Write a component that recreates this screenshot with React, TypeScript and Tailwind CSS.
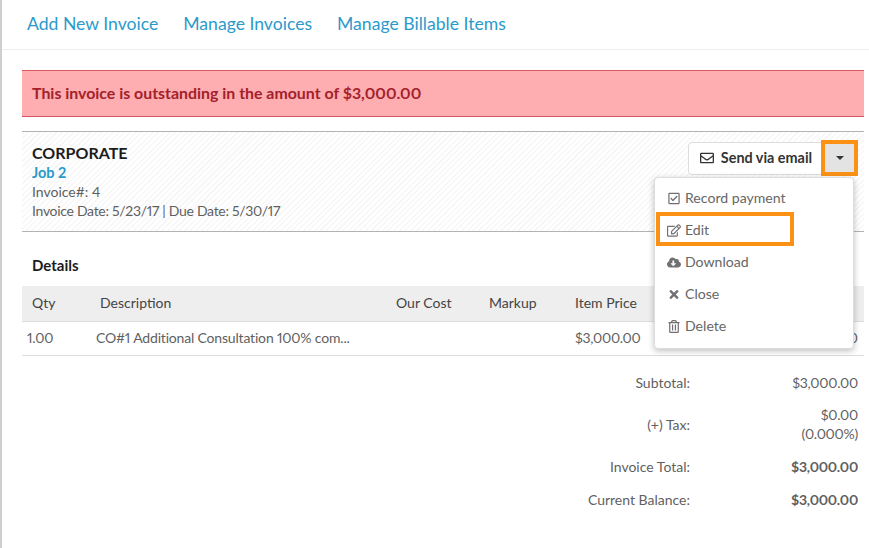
import { FaRegEnvelope, FaRegCheckSquare, FaRegEdit, FaCloudDownloadAlt, FaTimes, FaRegTrashAlt } from "react-icons/fa";

const menuItems = [
  { icon: FaRegCheckSquare, label: "Record payment" },
  { icon: FaRegEdit, label: "Edit" },
  { icon: FaCloudDownloadAlt, label: "Download" },
  { icon: FaTimes, label: "Close" },
  { icon: FaRegTrashAlt, label: "Delete" },
];

const totals = [
  { label: "Subtotal:", value: ["$3,000.00"], bold: false, height: "h-[32px]" },
  { label: "(+) Tax:", value: ["$0.00", "(0.000%)"], bold: false, height: "h-[52px]" },
  { label: "Invoice Total:", value: ["$3,000.00"], bold: true, height: "h-[33px]" },
  { label: "Current Balance:", value: ["$3,000.00"], bold: true, height: "h-[33px]" },
];

const App = () => (
  <div className="relative h-[548px] w-[869px] overflow-hidden border-l-2 border-[#cfcfcf] bg-white font-['Lato',sans-serif] text-[14px] text-[#5f5f5f] proportional-nums">
    <nav className="flex h-[50px] items-center gap-[25px] border-b border-[#eeeeee] pl-[25px] pb-[1px] text-[17.6px] text-[#2b9acb]">
      <a>Add New Invoice</a>
      <a>Manage Invoices</a>
      <a>Manage Billable Items</a>
    </nav>

    <div className="mt-5 ml-5 mr-[5px]">
      <div className="flex h-[47px] items-center border-y border-[#d9575f] bg-[#feadb1] pb-[2px] pl-[10px] text-[15.9px] font-bold text-[#a3212b]">
        This invoice is outstanding in the amount of $3,000.00
      </div>

      <div className="mt-[14px] flex h-[101px] justify-between border-y border-[#b3b3b3] bg-[repeating-linear-gradient(135deg,#f7f7f7_0px,#f7f7f7_1.5px,#ffffff_1.5px,#ffffff_4px)] pr-[6px] pl-[10px]">
        <div className="pt-[11px]">
          <div className="text-[16px] leading-[20px] font-bold text-[#1c1c1c]">CORPORATE</div>
          <div className="text-[14.5px] leading-[19px] font-bold text-[#2b9acb]">Job 2</div>
          <div className="leading-[19px]">Invoice#: 4</div>
          <div className="leading-[19px] tracking-[-0.3px]">Invoice Date: 5/23/17 | Due Date: 5/30/17</div>
        </div>
        <div className="mt-[8px] flex items-start">
          <button className="mt-[2px] flex h-[33px] w-[134px] items-center justify-center gap-[7px] rounded-l-[4px] border border-[#dddddd] bg-white pb-[2px] pl-[2px] text-[14.4px] font-bold text-[#333333]">
            <FaRegEnvelope className="h-[14px] w-[14px]" />
            Send via email
          </button>
          <button className="-ml-px flex h-[36px] w-[37px] items-center justify-center border-4 border-[#fb9216] bg-[#e3e3e3]">
            <span className="h-0 w-0 border-x-[4px] border-t-[4px] border-x-transparent border-t-[#333333]" />
          </button>
        </div>
      </div>

      <div className="flex h-[54px] items-center pt-[13px] pl-[10px] text-[15px] font-bold text-[#1c1c1c]">Details</div>

      <div className="grid h-[36px] grid-cols-[78px_296px_93px_86px_1fr] items-center border-b border-[#dddddd] bg-[#eeeeee] pb-[2px] text-[#444444]">
        <div className="pl-[10px]">Qty</div>
        <div>Description</div>
        <div>Our Cost</div>
        <div>Markup</div>
        <div>Item Price</div>
      </div>
      <div className="grid h-[34px] grid-cols-[74px_300px_93px_86px_1fr_auto] items-center border-b border-[#dddddd] pb-[2px]">
        <div className="pl-[5px] tracking-[-0.2px]">1.00</div>
        <div className="truncate tracking-[-0.18px]">CO#1 Additional Consultation 100% com...</div>
        <div />
        <div />
        <div className="tracking-[-0.3px]">$3,000.00</div>
        <div className="pr-[6px]">$3,000.00</div>
      </div>

      <div className="mt-[10px] pr-[6px]">
        {totals.map((t) => (
          <div key={t.label} className={`flex items-center justify-end ${t.height}`}>
            <div>{t.label}</div>
            <div className={`w-[168px] text-right leading-[19px] tracking-[-0.25px] ${t.bold ? "font-bold" : ""}`}>
              {t.value.map((v) => (
                <div key={v}>{v}</div>
              ))}
            </div>
          </div>
        ))}
      </div>
    </div>

    <div className="absolute top-[177px] left-[652px] h-[172px] w-[200px] rounded-[4px] border border-[#dddddd] bg-white py-[4px] shadow-[0_2px_6px_rgba(0,0,0,0.25)]">
      {menuItems.map((item) => (
        <div key={item.label} className="flex h-[32px] items-center gap-[4px] pl-[12px] text-[14.1px] text-[#666666]">
          <item.icon className="h-[13px] w-[14px] text-[#707070]" />
          {item.label}
        </div>
      ))}
    </div>
    <div className="absolute top-[212px] left-[654px] h-[34px] w-[138px] border-4 border-[#fb9216]" />
  </div>
);

export default App;
